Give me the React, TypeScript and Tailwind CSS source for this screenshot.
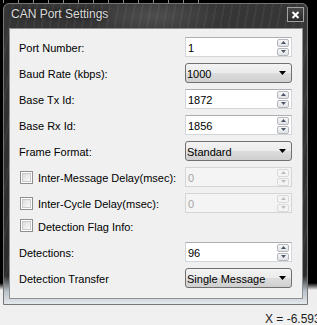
import React from 'react'

const sans = "font-['Liberation_Sans',Arial,sans-serif]"

function Arrow({ up, disabled }: { up?: boolean; disabled?: boolean }) {
  return (
    <div className={`flex h-[8px] w-[12px] items-center justify-center rounded-[2px] border ${disabled ? 'border-[#dadada] bg-[#f4f4f4]' : 'border-[#b4b8bd] bg-[linear-gradient(to_bottom,#f7f7f7,#e1e3e6)]'}`}>
      <svg width="5" height="3" viewBox="0 0 5 3">
        <path d={up ? 'M0 3 L2.5 0 L5 3 Z' : 'M0 0 L2.5 3 L5 0 Z'} fill={disabled ? '#bdbdbd' : '#4a5566'} />
      </svg>
    </div>
  )
}

function Spin({ value, disabled }: { value: string; disabled?: boolean }) {
  return (
    <div
      className={`flex h-[20px] w-[107px] items-center border ${
        disabled ? 'border-[#d5d5d5] bg-[#f4f4f4] text-[#a6a6a6]' : 'border-[#d2d5da] border-t-[#abadb3] bg-white text-black'
      }`}
    >
      <span className="flex-1 pl-[2px] pt-[2px]">{value}</span>
      <div className="mr-[2px] flex flex-col gap-[1px]">
        <Arrow up disabled={disabled} />
        <Arrow disabled={disabled} />
      </div>
    </div>
  )
}

function Select({ value }: { value: string }) {
  return (
    <div className="flex h-[20px] w-[107px] items-center justify-between rounded-[3px] border border-[#707070] bg-[linear-gradient(to_bottom,#f3f3f3_0%,#ebebeb_50%,#dddddd_51%,#cfcfcf_100%)] pl-[1px] pr-[5px] text-black">
      <span className="pt-[2px]">{value}</span>
      <svg width="7" height="4" viewBox="0 0 7 4">
        <path d="M0 0 L7 0 L3.5 4 Z" fill="#000" />
      </svg>
    </div>
  )
}

function Check() {
  return (
    <div className="ml-[1px] flex h-[13px] w-[13px] items-center justify-center border border-[#8e8f8f] bg-white">
      <div className="h-[9px] w-[9px] border border-[#c8cace] bg-[linear-gradient(135deg,#dcdcdc,#fbfbfb)]" />
    </div>
  )
}

function Row({ label, check, children }: { label: string; check?: boolean; children?: React.ReactNode }) {
  return (
    <div className="flex h-[20px] items-center">
      <div className="flex w-[175px] items-center gap-[5px] whitespace-nowrap pl-[9px]">
        {check && <Check />}
        <span className="pt-[2px]">{label}</span>
      </div>
      {children}
    </div>
  )
}

export default function App() {
  return (
    <div className={`h-[325px] w-[317px] overflow-hidden bg-[linear-gradient(to_bottom,#000_0,#000_283px,#eeeeee_290px,#f0f0f0_100%)] ${sans}`}>
      {/* ruler ticks behind the dialog */}
      <div className="h-[3px] w-[210px] bg-[repeating-linear-gradient(to_right,transparent_0_3px,#8a8a8a_3px_4px,transparent_4px_15px)]" />

      {/* dialog window */}
      <div className="ml-[3px] flex h-[302px] w-[305px] flex-col rounded-t-[6px] border border-[#767676] bg-[radial-gradient(ellipse_70px_22px_at_150px_12px,rgba(255,255,255,0.12),transparent),repeating-linear-gradient(100deg,rgba(255,255,255,0.045)_0_2px,transparent_2px_8px),linear-gradient(to_bottom,#363636_0,#2b2b2b_272px,#b7bfc7_287px,#e3e8ec_100%)]">
        <div className="flex h-[24px] items-start justify-between">
          <span className="pl-[7px] pt-[3px] text-[12px] leading-[14px] text-[#dadada] [text-shadow:0_0_4px_rgba(0,0,0,0.9)]">
            CAN Port Settings
          </span>
          <div className="mr-[3px] mt-[3px] flex h-[15px] w-[17px] items-center justify-center border border-[#a3a3a3] bg-[linear-gradient(to_bottom,#4a4a4a,#2a2a2a)]">
            <svg width="9" height="8" viewBox="0 0 9 8">
              <path d="M1.5 1 L7.5 7 M7.5 1 L1.5 7" stroke="#fff" strokeWidth="2" />
            </svg>
          </div>
        </div>

        <div className="ml-[5px] flex h-[271px] w-[294px] flex-col gap-[6px] border border-[#8c9196] bg-[#f0f0f0] pt-[8px] text-[11px] text-black">
          <Row label="Port Number:">
            <Spin value="1" />
          </Row>
          <Row label="Baud Rate (kbps):">
            <Select value="1000" />
          </Row>
          <Row label="Base Tx Id:">
            <Spin value="1872" />
          </Row>
          <Row label="Base Rx Id:">
            <Spin value="1856" />
          </Row>
          <Row label="Frame Format:">
            <Select value="Standard" />
          </Row>
          <Row label="Inter-Message Delay(msec):" check>
            <Spin value="0" disabled />
          </Row>
          <Row label="Inter-Cycle Delay(msec):" check>
            <Spin value="0" disabled />
          </Row>
          <div className="flex h-[17px] items-start gap-[5px] whitespace-nowrap pl-[9px]">
            <Check />
            <span>Detection Flag Info:</span>
          </div>
          <Row label="Detections:">
            <Spin value="96" />
          </Row>
          <Row label="Detection Transfer">
            <Select value="Single Message" />
          </Row>
        </div>
      </div>

      <div className="mt-[7px] whitespace-nowrap pl-[265px] text-[12px] leading-[14px] text-[#1e1e1e]">X = -6.593</div>
    </div>
  )
}
